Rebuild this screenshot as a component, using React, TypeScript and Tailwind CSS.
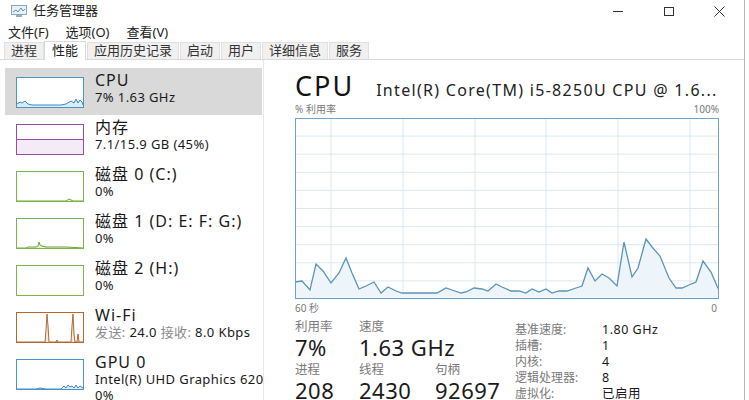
import React from 'react';

const font = { fontFamily: '"Noto Sans", "Noto Sans CJK SC", sans-serif' };

const cpuPts: [number, number][] = [
  [296, 282], [303, 281], [311, 290], [317, 264], [324, 271], [332, 283], [340, 273], [347, 258],
  [353, 273], [360, 289], [367, 286], [375, 282], [382, 293], [389, 287], [397, 291], [403, 293],
  [413, 293], [438, 293], [447, 288], [453, 290], [462, 293], [467, 292], [475, 288], [483, 289],
  [489, 291], [497, 284], [503, 287], [512, 291], [520, 291], [527, 293], [533, 289], [540, 292],
  [547, 289], [553, 293], [560, 291], [568, 291], [577, 288], [583, 286], [589, 268], [596, 281],
  [603, 274], [610, 278], [618, 286], [625, 242], [633, 277], [639, 268], [647, 239], [653, 247],
  [661, 256], [670, 278], [677, 288], [683, 288], [690, 285], [697, 282], [704, 261], [712, 272],
  [718, 286], [720, 290],
];

function CpuChart() {
  const w = 424;
  const h = 181;
  const line = cpuPts.map(([x, y]) => `${x - 296},${y - 118}`).join(' ');
  const area = `0,${h} ${line} ${w},${h}`;
  const vx = [36, 108, 180, 251, 323, 395];
  const hy = Array.from({ length: 9 }, (_, i) => ((i + 1) * h) / 10);
  return (
    <svg width={w} height={h} className="block">
      {vx.map((x) => (
        <line key={x} x1={x} y1={0} x2={x} y2={h} stroke="#dbe9f3" strokeWidth={1} />
      ))}
      {hy.map((y) => (
        <line key={y} x1={0} y1={y} x2={w} y2={y} stroke="#dbe9f3" strokeWidth={1} />
      ))}
      <polygon points={area} fill="#eef5fa" />
      <polyline points={line} fill="none" stroke="#5a93bb" strokeWidth={1.3} />
      <rect x={0.5} y={0.5} width={w - 1} height={h - 1} fill="none" stroke="#6ea4cc" />
    </svg>
  );
}

type ThumbProps = {
  border: string;
  fill?: string;
  line?: string;
  pts?: string;
  half?: boolean;
};

function Thumb({ border, fill, line, pts, half }: ThumbProps) {
  return (
    <svg width={68} height={31} className="block shrink-0 bg-white">
      {half && <rect x={0} y={15} width={68} height={16} fill="#f3ecf5" />}
      {half && <line x1={0} y1={15.5} x2={68} y2={15.5} stroke={border} />}
      {pts && <polygon points={`0,31 ${pts} 68,31`} fill={fill} />}
      {pts && <polyline points={pts} fill="none" stroke={line} strokeWidth={1} />}
      <rect x={0.5} y={0.5} width={67} height={30} fill="none" stroke={border} />
    </svg>
  );
}

const items = [
  {
    title: 'CPU',
    sub: ['7% 1.63 GHz'],
    thumb: (
      <Thumb
        border="#4b94c7"
        fill="#dcecf7"
        line="#3f88bb"
        pts="1,27 4,25 6,26 9,24 12,27 16,28 30,28 45,28 50,27 55,24 58,26 60,22 62,26 64,23 66,25 67,28"
      />
    ),
    selected: true,
  },
  { title: '内存', sub: ['7.1/15.9 GB (45%)'], thumb: <Thumb border="#9a4aa8" half /> },
  {
    title: '磁盘 0 (C:)',
    sub: ['0%'],
    thumb: <Thumb border="#7db54d" fill="#e7f2dc" line="#6aa73a" pts="1,30 50,30 53,28 55,29 57,30 67,30" />,
  },
  {
    title: '磁盘 1 (D: E: F: G:)',
    sub: ['0%'],
    thumb: (
      <Thumb
        border="#7db54d"
        fill="#e7f2dc"
        line="#6aa73a"
        pts="1,30 10,30 12,29 20,29 22,28 23,24 24,27 26,28 30,29 40,29 50,29 67,30"
      />
    ),
  },
  { title: '磁盘 2 (H:)', sub: ['0%'], thumb: <Thumb border="#7db54d" /> },
  {
    title: 'Wi-Fi',
    sub: ['wifi'],
    thumb: (
      <Thumb
        border="#b4682e"
        fill="#f6e9df"
        line="#b4682e"
        pts="1,30 29,30 30,18 31,2 32,14 33,30 40,30 41,28 42,30 55,30 56,14 57,2 58,22 59,30 61,30 62,22 63,30 67,30"
      />
    ),
  },
  {
    title: 'GPU 0',
    sub: ['Intel(R) UHD Graphics 620', '0%'],
    thumb: (
      <Thumb
        border="#4b94c7"
        fill="#dcecf7"
        line="#3f88bb"
        pts="1,30 20,30 24,29 30,30 45,30 48,27 50,29 52,26 54,28 56,27 58,29 60,26 62,29 64,27 67,29"
      />
    ),
  },
];

const subCls = 'text-[13px] leading-[16px] text-[#1a1a1a] whitespace-nowrap tracking-[0.4px]';

function SideItem({ item }: { item: (typeof items)[number] }) {
  return (
    <div
      className={`flex items-start h-[47px] pl-[11px] pt-[9px] gap-[11px] ${item.selected ? 'bg-[#d9d9d9]' : ''}`}
    >
      {item.thumb}
      <div className="flex flex-col -mt-[5px]">
        <div className="text-[16px] leading-[17px] text-[#1a1a1a] whitespace-nowrap tracking-[1px]">{item.title}</div>
        {item.sub.map((s) =>
          s === 'wifi' ? (
            <div key={s} className={subCls}>
              <span className="text-[#8a8a8a]">发送:</span> 24.0 <span className="text-[#8a8a8a]">接收:</span> 8.0 Kbps
            </div>
          ) : (
            <div key={s} className={subCls}>
              {s}
            </div>
          ),
        )}
      </div>
    </div>
  );
}

function Stat({ label, value, w }: { label: string; value: string; w: string }) {
  return (
    <div className={`flex flex-col shrink-0 ${w}`}>
      <div className="text-[12.5px] leading-[14px] text-[#7a7a7a]">{label}</div>
      <div className="text-[22px] leading-[20px] mt-[3px] text-[#1a1a1a] tracking-[0.5px] whitespace-nowrap">{value}</div>
    </div>
  );
}

const specs = [
  ['基准速度:', '1.80 GHz'],
  ['插槽:', '1'],
  ['内核:', '4'],
  ['逻辑处理器:', '8'],
  ['虚拟化:', '已启用'],
];

const tabs = ['进程', '性能', '应用历史记录', '启动', '用户', '详细信息', '服务'];

export default function App() {
  return (
    <div className="w-[749px] h-[400px] overflow-hidden bg-white" style={font}>
      <div className="w-[745px] h-[400px] border-r border-[#b5b5b5] flex flex-col">
        {/* title bar */}
        <div className="h-[22px] flex items-center shrink-0">
          <svg width={18} height={14} className="ml-[10px]" viewBox="0 0 18 14">
            <rect x={1.5} y={1.5} width={15} height={9} fill="#e8f1f8" stroke="#8aa5bd" />
            <polyline points="3,8 6,6 8,8 11,4 13,7 15,5" fill="none" stroke="#5c8fb8" strokeWidth={1} />
            <rect x={6} y={11} width={6} height={2} fill="#9aaec0" />
          </svg>
          <span className="ml-[5px] text-[13px] text-[#222]">任务管理器</span>
          <div className="ml-auto flex items-center h-full">
            <div className="w-[51px] flex justify-center">
              <div className="w-[10px] h-px bg-[#333]" />
            </div>
            <div className="w-[51px] flex justify-center">
              <div className="w-[10px] h-[9px] border border-[#333]" />
            </div>
            <div className="w-[50px] flex justify-center">
              <svg width={11} height={11} viewBox="0 0 11 11">
                <path d="M0.5 0.5 L10.5 10.5 M10.5 0.5 L0.5 10.5" stroke="#333" strokeWidth={1} />
              </svg>
            </div>
          </div>
        </div>
        {/* menu */}
        <div className="h-[21px] flex items-center gap-[17px] pl-[8px] text-[13px] text-[#222] shrink-0">
          <span>文件(F)</span>
          <span>选项(O)</span>
          <span>查看(V)</span>
        </div>
        {/* tabs */}
        <div className="h-[17px] flex items-end pl-[3px] border-b border-[#d9d9d9] shrink-0">
          {tabs.map((t) => (
            <div
              key={t}
              className={
                t === '性能'
                  ? 'h-[19px] -mb-px px-[7px] flex items-center bg-white border border-b-0 border-[#d9d9d9] text-[13px] text-[#222]'
                  : 'h-[17px] px-[6px] flex items-center bg-[#f0f0f0] border border-b-0 border-[#e0e0e0] text-[13px] text-[#333] ml-[1px]'
              }
            >
              {t}
            </div>
          ))}
        </div>
        {/* content */}
        <div className="flex flex-1 min-h-0">
          <div className="w-[264px] shrink-0 border-r border-[#e8e8e8] pt-[8px] pl-[5px] pr-[1px] flex flex-col">
            {items.map((it) => (
              <SideItem key={it.title} item={it} />
            ))}
          </div>
          <div className="flex-1 pl-[31px] pt-[11px] flex flex-col">
            <div className="flex items-baseline w-[424px]">
              <span className="text-[27px] leading-[30px] text-[#111] tracking-[2px]">CPU</span>
              <span className="ml-[22px] text-[16px] text-[#222] tracking-[1.3px] whitespace-nowrap">
                Intel(R) Core(TM) i5-8250U CPU @ 1.6...
              </span>
            </div>
            <div className="flex justify-between w-[424px] text-[10px] leading-[14px] text-[#7a7a7a]">
              <span>% 利用率</span>
              <span>100%</span>
            </div>
            <div className="mt-[2px]">
              <CpuChart />
            </div>
            <div className="flex justify-between w-[424px] mt-[2px] text-[10px] leading-[14px] text-[#7a7a7a]">
              <span>60 秒</span>
              <span className="mr-[2px]">0</span>
            </div>
            <div className="flex mt-[5px]">
              <div className="flex flex-col gap-[6px] w-[220px] shrink-0">
                <div className="flex">
                  <Stat label="利用率" value="7%" w="w-[64px]" />
                  <Stat label="速度" value="1.63 GHz" w="w-[76px]" />
                </div>
                <div className="flex">
                  <Stat label="进程" value="208" w="w-[64px]" />
                  <Stat label="线程" value="2430" w="w-[76px]" />
                  <Stat label="句柄" value="92697" w="w-[70px]" />
                </div>
              </div>
              <div className="flex flex-col mt-[2px]">
                {specs.map(([k, v]) => (
                  <div key={k} className="flex h-[16px] items-center">
                    <span className="w-[87px] text-[12px] text-[#7a7a7a]">{k}</span>
                    <span className="text-[12.5px] text-[#1a1a1a] tracking-[0.5px]">{v}</span>
                  </div>
                ))}
              </div>
            </div>
          </div>
        </div>
      </div>
    </div>
  );
}
